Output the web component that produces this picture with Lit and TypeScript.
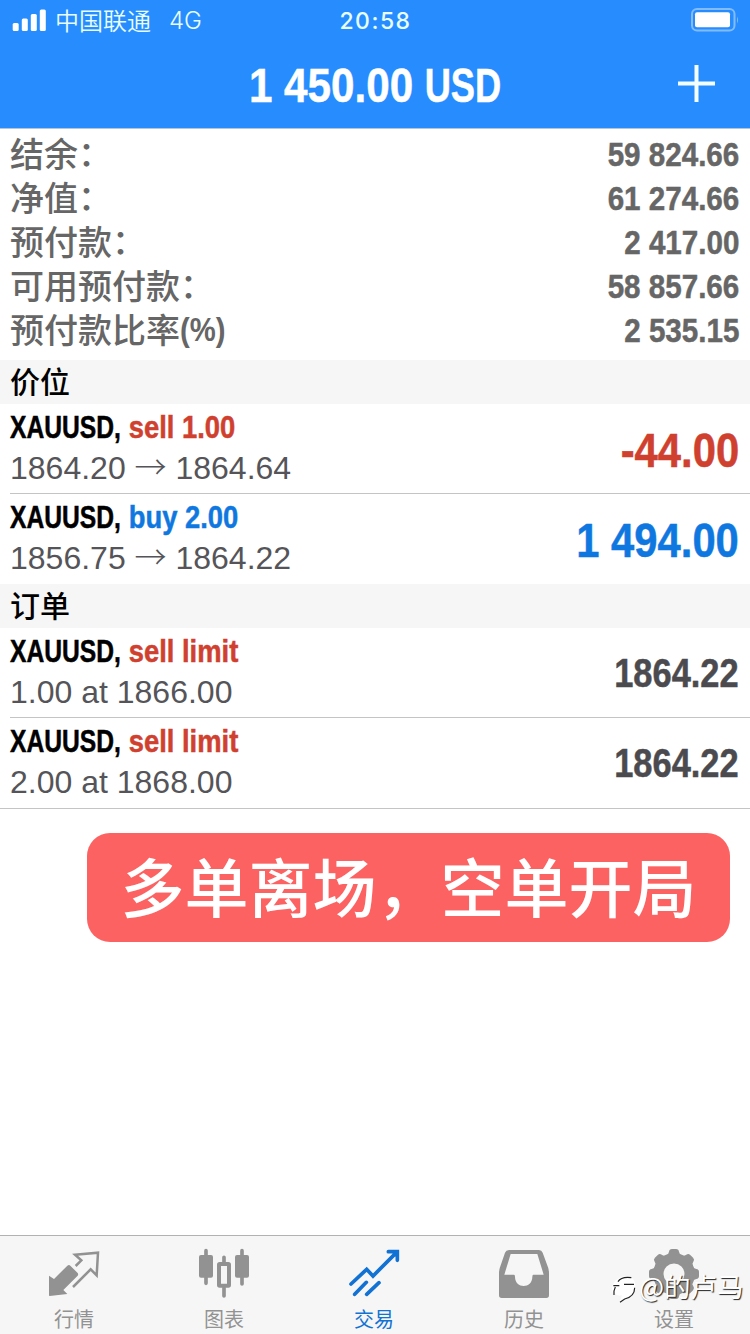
import { LitElement, html, svg, css } from "lit";
import { customElement, property } from "lit/decorators.js";

const account = [
  ["结余", "59 824.66"],
  ["净值", "61 274.66"],
  ["预付款", "2 417.00"],
  ["可用预付款", "58 857.66"],
  ["预付款比率", "2 535.15"],
];

const positions = [
  { side: "sell", label: "sell 1.00", from: "1864.20", to: "1864.64", profit: "-44.00" },
  { side: "buy", label: "buy 2.00", from: "1856.75", to: "1864.22", profit: "1 494.00" },
];

const orders = [
  { label: "sell limit", detail: "1.00 at 1866.00", price: "1864.22" },
  { label: "sell limit", detail: "2.00 at 1868.00", price: "1864.22" },
];

const icons: Record<string, unknown> = {
  quotes: svg`<svg viewBox="132 60 180 168">
    <path fill="currentColor" d="M147 152l15 10 40-40q5-4 9 0l22 22q3 4 0 8l-43 43 12 12-53 6q-2 0-2-2z"/>
    <path fill="none" stroke="currentColor" stroke-width="7.5" d="M227 123l17-17-19-17 69-6-4 68-18-18-53 53"/></svg>`,
  charts: svg`<svg viewBox="582 60 180 168">
    <g stroke="currentColor" stroke-width="11" stroke-linecap="round" fill="none">
      <path d="M618 77v98M726 77v100M672 97v18M672 188v25"/></g>
    <rect x="597" y="90" width="42" height="68" rx="6" fill="currentColor"/>
    <rect x="705" y="90" width="42" height="68" rx="6" fill="currentColor"/>
    <rect x="657" y="117" width="30" height="65" rx="2" fill="#f6f6f6" stroke="currentColor" stroke-width="12"/></svg>`,
  trade: svg`<svg viewBox="132 60 180 168">
    <g stroke="currentColor" stroke-width="11" stroke-linecap="round" fill="none">
      <path d="M153 177l47-44 19 20 70-70M164 208l35-36M200 208l37-35"/>
      <path d="M265 80h27v26"/></g>
    <path fill="currentColor" d="M270 77h27v29z"/></svg>`,
  history: svg`<svg viewBox="582 60 180 168">
    <path fill="currentColor" fill-rule="evenodd" d="M627 75h90q8 0 11 8l16 44q3 8 3 18v66q0 8-8 8H605q-8 0-8-8v-66q0-10 3-18l15-44q3-8 12-8zM632 87l-19 62h29q3 0 3 6c0 37 52 37 52 0q0-6 3-6h31l-19-62z"/></svg>`,
  settings: svg`<svg viewBox="192 60 180 168">
    <circle cx="282" cy="147" r="47" fill="none" stroke="currentColor" stroke-width="31"/>
    ${[0, 45, 90, 135, 180, 225, 270, 315].map(
      (a) => svg`<path transform="rotate(${a} 282 147)" fill="currentColor" d="M257 92q9-3 10-12 1-8 9-8h12q8 0 9 8 1 9 10 12z"/>`
    )}</svg>`,
};

@customElement("tab-item")
class TabItem extends LitElement {
  @property() icon = "";
  @property() label = "";
  static styles = css`
    :host { display: flex; flex-direction: column; align-items: center; padding: 9px 2px 0 0; color: #929292; }
    :host([active]) { color: #1272d3; }
    svg { display: block; width: 60px; height: 56px; }
    span { font: 20px/30px "Noto Sans CJK SC", sans-serif; margin-top: 3px; }
  `;
  render() {
    return html`${icons[this.icon]}<span>${this.label}</span>`;
  }
}

@customElement("app-root")
class AppRoot extends LitElement {
  static styles = css`
    :host { display: flex; flex-direction: column; position: relative; width: 750px; height: 1334px; box-sizing: border-box; overflow: hidden; background: #fff; font-family: "Liberation Sans", "Noto Sans CJK SC", sans-serif; white-space: nowrap; }
    header { height: 129px; background: #278dff; border-bottom: 1px solid #b5c5d8; box-sizing: border-box; color: #fff; }
    .status { display: grid; grid-template-columns: 1fr auto 1fr; grid-template-rows: 40px; align-items: center; height: 40px; padding: 0 11px 0 12px; }
    .carrier { display: flex; align-items: center; font-family: "Noto Sans CJK SC", sans-serif; font-weight: 350; font-size: 24px; line-height: 38px; color: #e8fdff; }
    .carrier svg { margin-right: 8px; }
    .net { font: 300 24px/38px "Inter", sans-serif; margin: 2px 0 0 18px; }
    .clock { font: 500 23px/38px "Inter", sans-serif; letter-spacing: 1.5px; color: #e8fdff; padding-top: 2px; }
    .battery { justify-self: end; }
    .status svg, .plus { display: block; }
    .nav { display: grid; grid-template-columns: 1fr auto 1fr; grid-template-rows: 87px; align-items: center; height: 87px; padding: 0 35px 0 36px; }
    .nav .plus { grid-column: 3; justify-self: end; }
    .squeeze { display: inline-block; transform: scaleX(0.87); font-weight: bold; -webkit-text-stroke: 0.5px currentColor; }
    .title { grid-column: 2; font-size: 48.5px; line-height: 83px; padding-top: 4px; }
    .unit { display: inline-block; transform: scaleX(0.86); transform-origin: left; margin-right: -14px; }
    .right { transform-origin: right; }
    .left { transform-origin: left; }
    .summary { height: 231px; box-sizing: border-box; padding: 2px 11px 0 10px; color: #666; }
    .summary div { display: flex; justify-content: space-between; height: 44px; line-height: 44px; font-size: 34px; }
    .label { font-family: "Noto Sans CJK SC", sans-serif; font-weight: 500; display: flex; }
    .colon { margin-top: -1px; }
    .pct { font-family: "Liberation Sans", sans-serif; transform: scaleX(0.86); -webkit-text-stroke: 0; }
    .amount { padding-top: 1px; }
    h2 { margin: 0; height: 44px; padding-left: 10px; background: #f6f6f6; font: 500 30px/41px "Noto Sans CJK SC", sans-serif; color: #000; box-sizing: border-box; }
    .row { display: flex; justify-content: space-between; align-items: center; height: 90px; margin-left: 10px; padding-right: 11px; border-bottom: 1px solid #c4c4c6; box-sizing: border-box; }
    .row.last { border-bottom-color: transparent; }
    .row.end { height: 91px; margin-left: 0; padding-left: 10px; border-bottom-color: #c4c4c6; }
    .name { font-size: 32px; line-height: 41px; transform: scaleX(0.855); }
    .symbol { display: inline-block; transform: scaleX(0.9); transform-origin: left; margin-right: -14px; }
    .info { display: flex; flex-direction: column; height: 84px; }
    .detail { font-size: 32px; line-height: 41px; color: #555559; }
    .arrow { font-family: "Noto Sans CJK SC", sans-serif; font-weight: 300; line-height: 1; }
    .sell { color: #d0402f; }
    .buy { color: #0f78e0; }
    .profit { font-size: 48px; line-height: 80px; padding-top: 5px; }
    .price { font-size: 40px; line-height: 80px; color: #4b4b4f; transform: scaleX(0.86); }
    .banner { width: 643px; height: 109px; margin: 24px 0 0 87px; border-radius: 23px; background: #fc6262; color: #fff; font: 500 64px/102px "Noto Sans CJK SC", sans-serif; text-align: center; }
    nav { display: grid; grid-template-columns: repeat(5, 1fr); height: 99px; margin-top: auto; box-sizing: border-box; border-top: 1px solid #b2b2b2; background: #f6f6f6; }
    .mark { position: absolute; left: 610px; top: 1269px; display: flex; align-items: center; height: 34px; color: #fff; font: 26.5px/34px "Noto Sans CJK SC", sans-serif; text-shadow: 1px 1px 1px #222; }
    .mark svg { display: block; }
  `;
  render() {
    return html`
      <header>
        <div class="status">
          <div class="carrier">
            <svg width="35" height="22" viewBox="0 0 35 22" fill="#fff">
              <rect x="0.7" y="14" width="6" height="8" rx="1.5"/><rect x="9.8" y="9.5" width="6" height="12.5" rx="1.5"/>
              <rect x="18.8" y="5" width="6" height="17" rx="1.5"/><rect x="27.8" y="0.5" width="6" height="21.5" rx="1.5"/>
            </svg>
            中国联通<span class="net">4G</span>
          </div>
          <div class="clock">20:58</div>
          <svg class="battery" width="48" height="24" viewBox="0 0 48 24">
            <rect x="1" y="1" width="42.5" height="21.5" rx="5" fill="none" stroke="#83bcfd" stroke-width="2"/>
            <rect x="4" y="4.3" width="35" height="15" rx="2" fill="#fff"/>
            <path d="M46 8.5q2 3.5 0 7z" fill="#83bcfd"/>
          </svg>
        </div>
        <div class="nav">
          <div class="squeeze title">1 450.00 <span class="unit">USD</span></div>
          <svg class="plus" width="37" height="37" viewBox="0 0 37 37"><path d="M0 18.5h37M18.5 0v37" stroke="#f2feff" stroke-width="4"/></svg>
        </div>
      </header>
      <section class="summary">
        ${account.map(
          ([label, value], i) => html`<div>
            <span class="label">${label}${i === 4
              ? html`<span class="pct squeeze left">(%)</span>`
              : html`<span class="colon">：</span>`}</span>
            <span class="squeeze right amount">${value}</span>
          </div>`
        )}
      </section>
      <h2>价位</h2>
      ${positions.map(
        (p, i) => html`<div class="row ${i ? "last" : ""}">
          <div class="info">
            <span class="squeeze left name"><span class="symbol">XAUUSD,</span> <span class=${p.side}>${p.label}</span></span>
            <span class="detail">${p.from} <span class="arrow">→</span> ${p.to}</span>
          </div>
          <span class="squeeze right profit ${p.side}">${p.profit}</span>
        </div>`
      )}
      <h2>订单</h2>
      ${orders.map(
        (o, i) => html`<div class="row ${i ? "end" : ""}">
          <div class="info">
            <span class="squeeze left name"><span class="symbol">XAUUSD,</span> <span class="sell">${o.label}</span></span>
            <span class="detail">${o.detail}</span>
          </div>
          <span class="squeeze right price">${o.price}</span>
        </div>`
      )}
      <div class="banner">多单离场，空单开局</div>
      <nav>
        <tab-item icon="quotes" label="行情"></tab-item>
        <tab-item icon="charts" label="图表"></tab-item>
        <tab-item icon="trade" label="交易" active></tab-item>
        <tab-item icon="history" label="历史"></tab-item>
        <tab-item icon="settings" label="设置"></tab-item>
      </nav>
      <div class="mark">
        <svg width="29" height="34" viewBox="18 30 87 102">
          <path d="M24 100c-4-30 20-52 48-48q20 4 22 26c0 22-18 36-48 53l8-22q-18 4-22-9z" fill="#fff"/>
          <path d="M30 108q-2-12 4-24M28 80h18M42 68q10-16 40-12M60 76h30M92 86q0 26-30 34l-14 10" fill="none" stroke="#222" stroke-width="3.5"/>
        </svg>
        @的卢马
      </div>
    `;
  }
}
